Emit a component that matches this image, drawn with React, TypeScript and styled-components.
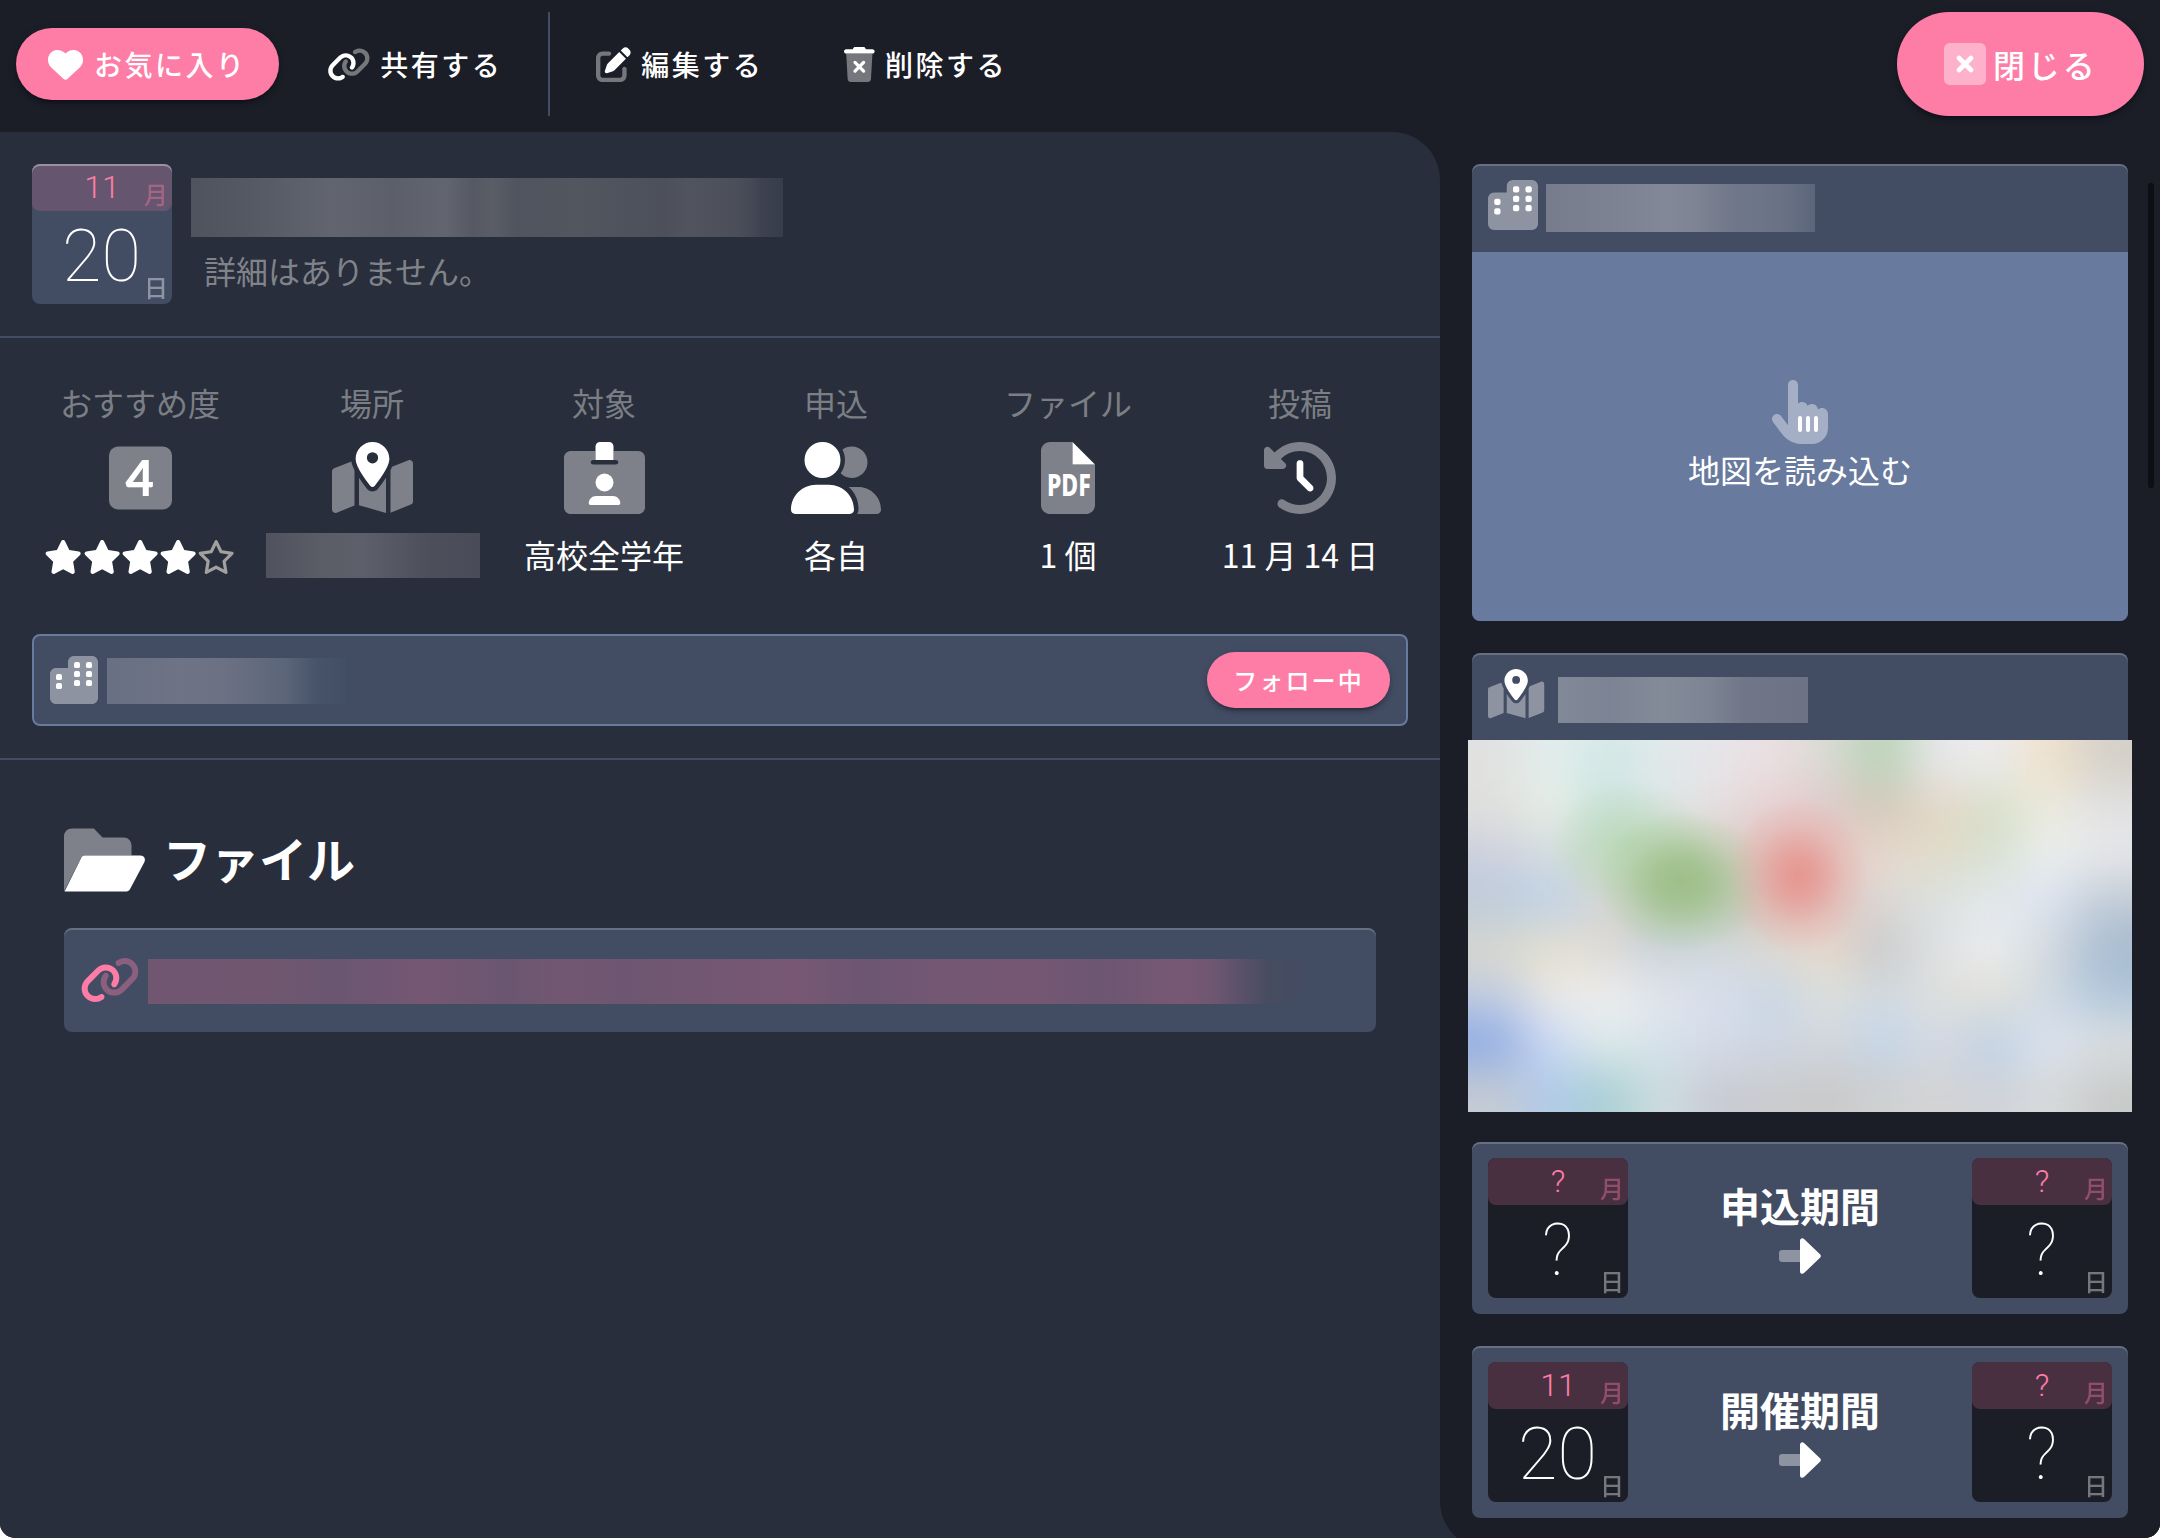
import React from "react";
import styled, { createGlobalStyle, css } from "styled-components";
import { FaHeart, FaStar, FaRegStar } from "react-icons/fa6";

const color = {
  base: "#1b1d27",
  panel: "#282e3b",
  card: "#424c63",
  accent: "#687a9e",
  pink: "#fd7da7",
  highlight: "inset 0 2px 0 rgba(255, 255, 255, 0.2)",
};

const Global = createGlobalStyle`
  * { box-sizing: border-box; }
  html, body { margin: 0; padding: 0; background: #fff; }
  body {
    color: #fff;
    font-family: "Noto Sans CJK JP", sans-serif;
    font-size: 32px;
    line-height: 1;
    overflow: hidden;
  }
`;

const Screen = styled.div`
  display: flex;
  flex-direction: column;
  width: 2160px;
  height: 1538px;
  overflow: hidden;
  border-radius: 0 0 15px 15px;
  background: ${color.base};
`;

/* ---------- icons ---------- */

const IconSvg = styled.svg<{ $size: number; $ratio?: number }>`
  display: block;
  flex: none;
  height: ${(p) => p.$size}px;
  width: ${(p) => p.$size * (p.$ratio ?? 1)}px;
  fill: currentColor;
  overflow: visible;
  .soft { opacity: 0.4; }
`;

type IconProps = { size: number };

const LinkIcon = ({ size }: IconProps) => (
  <IconSvg $size={size} $ratio={1.25} viewBox="0 0 640 512">
    <path className="soft" d="M579.8 267.7c56.5-56.5 56.5-148 0-204.5c-50-50-128.8-56.5-186.3-15.4l-1.6 1.1c-14.4 10.3-17.7 30.3-7.4 44.6s30.3 17.7 44.6 7.4l1.6-1.1c32.1-22.9 76-19.3 103.8 8.6c31.5 31.5 31.5 82.5 0 114L422.3 334.8c-31.5 31.5-82.5 31.5-114 0c-27.9-27.9-31.5-71.8-8.6-103.8l1.1-1.6c10.3-14.4 6.9-34.4-7.4-44.6s-34.4-6.9-44.6 7.4l-1.1 1.6C206.5 251.2 213 330 263 380c56.5 56.5 148 56.5 204.5 0L579.8 267.7z" />
    <path d="M60.2 244.3c-56.5 56.5-56.5 148 0 204.5c50 50 128.8 56.5 186.3 15.4l1.6-1.1c14.4-10.3 17.7-30.3 7.4-44.6s-30.3-17.7-44.6-7.4l-1.6 1.1c-32.1 22.9-76 19.3-103.8-8.6C74 372 74 321 105.5 289.5L217.7 177.2c31.5-31.5 82.5-31.5 114 0c27.9 27.9 31.5 71.8 8.6 103.9l-1.1 1.6c-10.3 14.4-6.9 34.4 7.4 44.6s34.4 6.9 44.6-7.4l1.1-1.6C433.5 260.8 427 182 377 132c-56.5-56.5-148-56.5-204.5 0L60.2 244.3z" />
  </IconSvg>
);

const EditIcon = ({ size }: IconProps) => (
  <IconSvg $size={size} viewBox="0 0 512 512">
    <path className="soft" d="M96 64C43 64 0 107 0 160V416c0 53 43 96 96 96H352c53 0 96-43 96-96V320c0-17.7-14.3-32-32-32s-32 14.3-32 32v96c0 17.7-14.3 32-32 32H96c-17.7 0-32-14.3-32-32V160c0-17.7 14.3-32 32-32h96c17.7 0 32-14.3 32-32s-14.3-32-32-32H96z" />
    <path d="M471.6 21.7c-21.9-21.9-57.3-21.9-79.2 0L362.3 51.7l97.9 97.9 30.1-30.1c21.9-21.9 21.9-57.3 0-79.2L471.6 21.7zm-299.2 220c-6.1 6.1-10.8 13.6-13.5 21.9l-29.6 88.8c-2.9 8.6-.6 18.1 5.8 24.6s15.9 8.7 24.6 5.8l88.8-29.6c8.2-2.7 15.7-7.4 21.9-13.5L437.7 172.3 339.7 74.3 172.4 241.7z" />
  </IconSvg>
);

const TrashIcon = ({ size }: IconProps) => (
  <IconSvg $size={size} $ratio={0.875} viewBox="0 0 448 512">
    <path className="soft" d="M32 96l21.2 371c1.6 25.3 22.6 45 47.9 45H346.9c25.3 0 46.3-19.7 47.9-45L416 96z" />
    <path d="M135.2 17.7L128 32H32C14.3 32 0 46.3 0 64S14.3 96 32 96H416c17.7 0 32-14.3 32-32s-14.3-32-32-32H320l-7.2-14.3C307.4 6.8 296.3 0 284.2 0H163.8c-12.1 0-23.2 6.8-28.6 17.7z" />
    <path d="M161 226L287 352M287 226L161 352" fill="none" stroke="currentColor" strokeWidth="48" strokeLinecap="round" />
  </IconSvg>
);

const CloseIcon = ({ size }: IconProps) => (
  <IconSvg $size={size} viewBox="0 0 448 448">
    <rect className="soft" width="448" height="448" rx="60" />
    <path d="M160 160L288 288M288 160L160 288" fill="none" stroke="currentColor" strokeWidth="50" strokeLinecap="round" />
  </IconSvg>
);

const RatingIcon = ({ size }: IconProps) => (
  <IconSvg $size={size} $ratio={0.875} viewBox="0 0 448 512">
    <rect className="soft" y="32" width="448" height="448" rx="64" />
    <text x="218" y="382" textAnchor="middle" fontFamily="Lato, sans-serif" fontWeight="900" fontSize="350">4</text>
  </IconSvg>
);

const MapIcon = ({ size }: IconProps) => (
  <IconSvg $size={size} $ratio={1.125} viewBox="0 0 576 512">
    <path className="soft" d="M416 200.4c3.5-6.9 6.7-13.8 9.6-20.6c.5-1.2 1-2.5 1.5-3.7l116-46.4C558.9 123.4 576 135 576 152V422.8c0 9.8-6 18.6-15.1 22.3L416 503V200.4zM137.6 138.3c2.4 14.1 7.2 28.3 12.8 41.5c2.9 6.8 6.1 13.7 9.6 20.6V451.8L32.9 502.7C17.1 509 0 497.4 0 480.4V209.6c0-9.8 6-18.6 15.1-22.3l122.6-49zM327.8 332c13.9-17.4 35.7-45.7 56.2-77V504.3L192 449.4V255c20.5 31.3 42.3 59.6 56.2 77c20.5 25.6 59.1 25.6 79.6 0z" />
    <path fillRule="evenodd" d="M408 120c0 54.6-73.1 151.9-105.2 192c-7.7 9.6-22 9.6-29.6 0C241.1 271.9 168 174.6 168 120C168 53.7 221.7 0 288 0s120 53.7 120 120zM288 152a40 40 0 1 0 0-80 40 40 0 1 0 0 80z" />
  </IconSvg>
);

const BadgeIcon = ({ size }: IconProps) => (
  <IconSvg $size={size} $ratio={1.125} viewBox="0 0 576 512">
    <path className="soft" fillRule="evenodd" d="M48 64H224V128H208c-10 0-18 7-18 16s8 16 18 16H368c10 0 18-7 18-16s-8-16-18-16H352V64H528c26.500 0 48 21.500 48 48V464c0 26.500-21.500 48-48 48H48c-26.500 0-48-21.500-48-48V112C0 85.500 21.500 64 48 64z" />
    <path d="M224 128V32c0-17.700 14.300-32 32-32h64c17.700 0 32 14.300 32 32V128z" />
    <circle cx="288" cy="288" r="64" />
    <path d="M176 436c0-29 23-52 52-52H348c29 0 52 23 52 52c0 7-5 12-12 12H188c-7 0-12-5-12-12z" />
  </IconSvg>
);

const PeopleIcon = ({ size }: IconProps) => (
  <IconSvg $size={size} $ratio={1.25} viewBox="0 0 640 512">
    <path className="soft" d="M609.3 512H471.4c5.4-9.4 8.6-20.3 8.6-32v-8c0-60.7-27.1-115.2-69.8-151.8c2.4-.1 4.700-.2 7.100-.2h61.400C567.800 320 640 392.200 640 481.300c0 17-13.800 30.700-30.700 30.700zM432 256c-31 0-59-12.600-79.300-32.900C372.400 196.500 384 163.600 384 128c0-26.800-6.600-52.100-18.300-74.300C384.300 40.100 407.200 32 432 32c61.900 0 112 50.100 112 112s-50.100 112-112 112z" />
    <path d="M96 128a128 128 0 1 1 256 0A128 128 0 1 1 96 128zM0 482.300C0 383.800 79.800 304 178.300 304h91.400C368.200 304 448 383.800 448 482.300c0 16.400-13.300 29.700-29.700 29.700H29.700C13.300 512 0 498.700 0 482.300z" />
  </IconSvg>
);

const PdfIcon = ({ size }: IconProps) => (
  <IconSvg $size={size} $ratio={0.75} viewBox="0 0 384 512">
    <path className="soft" d="M64 0H224V160H384V448c0 35.300-28.700 64-64 64H64c-35.300 0-64-28.700-64-64V64C0 28.700 28.700 0 64 0z" />
    <path d="M224 0L384 160H224z" />
    <text x="42" y="382" textLength="312" lengthAdjust="spacingAndGlyphs" fontFamily="'Noto Sans', sans-serif" fontWeight="800" fontSize="218">PDF</text>
  </IconSvg>
);

const HistoryIcon = ({ size }: IconProps) => (
  <IconSvg $size={size} viewBox="0 0 512 512">
    <path className="soft" d="M75 75L41 41C25.900 25.900 0 36.600 0 57.900V168c0 13.300 10.700 24 24 24H134.100c21.400 0 32.100-25.900 17-41l-30.800-30.800C155 85.500 203 64 256 64c106 0 192 86 192 192s-86 192-192 192c-40.800 0-78.600-12.700-109.700-34.400c-14.500-10.100-34.400-6.600-44.600 7.900s-6.600 34.400 7.900 44.600C151.200 495 201.700 512 256 512c141.400 0 256-114.600 256-256S397.400 0 256 0C185.300 0 121.300 28.700 75 75z" />
    <path d="M256 128c-13.300 0-24 10.700-24 24V256c0 6.400 2.500 12.500 7 17l72 72c9.400 9.400 24.600 9.400 33.900 0s9.400-24.600 0-33.900l-65-65V152c0-13.300-10.700-24-24-24z" />
  </IconSvg>
);

const WINDOWS = [
  [64, 192], [64, 288],
  [256, 64], [256, 160], [256, 256],
  [384, 64], [384, 160], [384, 256],
];

const BuildingIcon = ({ size }: IconProps) => (
  <IconSvg $size={size} viewBox="0 0 512 512">
    <path className="soft" d="M192 64c0-35.300 28.700-64 64-64H448c35.300 0 64 28.700 64 64V448c0 35.300-28.700 64-64 64H64c-35.300 0-64-28.700-64-64V192c0-35.300 28.700-64 64-64H192z" />
    {WINDOWS.map(([x, y]) => (
      <rect key={`${x}-${y}`} x={x} y={y} width="64" height="64" rx="20" />
    ))}
  </IconSvg>
);

const FolderIcon = ({ size }: IconProps) => (
  <IconSvg $size={size} $ratio={1.125} viewBox="0 0 576 512">
    <path className="soft" d="M0 480V88C0 57 25 32 56 32H212L274 96H424c31 0 56 25 56 56V224H147c-10 0-19 5-24 14z" />
    <path d="M4 480L123 240C128 230 137 224 148 224H544c24 0 39 24 28 46L470 463c-5 10-15 17-26 17z" />
  </IconSvg>
);

const PointerIcon = ({ size }: IconProps) => (
  <IconSvg $size={size} $ratio={0.875} viewBox="0 0 448 512">
    <path className="soft" d="M128 40c0-22.100 17.900-40 40-40s40 17.900 40 40V188.200c8.500-7.600 19.700-12.200 32-12.200c20.600 0 38.200 13 45 31.200c8.800-9.300 21.200-15.200 35-15.200c25.300 0 46 19.500 47.900 44.300c8.500-7.700 19.800-12.300 32.100-12.300c26.500 0 48 21.500 48 48v112c0 70.700-57.300 128-128 128H234.700c-5 0-9.900-.3-14.700-1c-55.300-5.600-106.200-34-140-79L8 336c-13.300-17.700-9.700-42.700 8-56s42.700-9.700 56 8l56 74.700V40z" />
    <rect x="208" y="288" width="32" height="128" rx="16" />
    <rect x="272" y="288" width="32" height="128" rx="16" />
    <rect x="336" y="288" width="32" height="128" rx="16" />
  </IconSvg>
);

const ArrowIcon = ({ size }: IconProps) => (
  <IconSvg $size={size} $ratio={42 / 36} viewBox="0 0 42 36">
    <path className="soft" d="M3 12H21V24H3a3 3 0 0 1-3-3V15a3 3 0 0 1 3-3z" />
    <path d="M21 2.500C21 .4 23.500-.7 25 .9L41 16.200c1.100 1 1.100 2.600 0 3.600L25 35.100c-1.500 1.600-4 .5-4-1.600z" />
  </IconSvg>
);

/* ---------- toolbar ---------- */

const Toolbar = styled.header`
  display: flex;
  align-items: center;
  flex: none;
  height: 132px;
  padding: 0 16px 4px;
`;

const pill = css`
  background: ${color.pink};
  box-shadow: 0 6px 2px -4px rgba(0, 0, 0, 0.2), 0 4px 4px rgba(0, 0, 0, 0.14), 0 2px 10px rgba(0, 0, 0, 0.12);
`;

const ToolButton = styled.button<{ $filled?: boolean; $left?: number; $gap?: number }>`
  display: flex;
  align-items: center;
  gap: ${(p) => p.$gap ?? 10}px;
  height: 72px;
  padding: 0 ${(p) => (p.$filled ? 32 : 0)}px;
  margin-left: ${(p) => p.$left ?? 0}px;
  border: 0;
  border-radius: 36px;
  background: transparent;
  color: #fff;
  font: 500 28px/1 "Noto Sans CJK JP", sans-serif;
  letter-spacing: 0.0893em;
  white-space: nowrap;
  ${(p) => p.$filled && pill}
`;

const ToolDivider = styled.div`
  width: 2px;
  height: 104px;
  margin-left: 46px;
  background: ${color.card};
`;

const CloseButton = styled(ToolButton)`
  width: 247px;
  height: 104px;
  margin-left: auto;
  padding: 0 0 0 47px;
  border-radius: 52px;
  font-size: 32px;
`;

/* ---------- main panel ---------- */

const Body = styled.div`
  display: flex;
  flex: 1;
  min-height: 0;
`;

const Main = styled.main`
  width: 1440px;
  background: ${color.panel};
  border-top-right-radius: 48px;
`;

const Section = styled.section`
  border-bottom: 2px solid ${color.card};
`;

const Heading = styled(Section)`
  display: flex;
  height: 206px;
  padding: 32px;
`;

const HeadingText = styled.div`
  display: flex;
  flex-direction: column;
  padding: 14px 0 0 19px;
`;

const Detail = styled.p`
  margin: 17px 0 0 13px;
  color: #808389;
`;

const Redacted = styled.div<{ $w: number; $h: number; $fill: string }>`
  flex: none;
  width: ${(p) => p.$w}px;
  height: ${(p) => p.$h}px;
  background: linear-gradient(90deg, ${(p) => p.$fill});
`;

/* ---------- calendar tile ---------- */

const Tile = styled.div<{ $raised?: boolean }>`
  display: flex;
  flex-direction: column;
  flex: none;
  width: 140px;
  height: 140px;
  border-radius: 8px;
  background: ${(p) => (p.$raised ? color.card : color.base)};
`;

const TileMonth = styled.div<{ $raised?: boolean }>`
  position: relative;
  display: flex;
  align-items: center;
  justify-content: center;
  height: 47px;
  padding-bottom: 2px;
  border-radius: 8px;
  background: ${(p) => (p.$raised ? "#66556e" : "#493041")};
  box-shadow: ${(p) => (p.$raised ? "inset 0 2px 0 rgba(255,255,255,0.35)" : "none")};
  color: ${color.pink};
  font-family: Roboto, sans-serif;
  font-weight: 300;
  font-size: 32px;
`;

const TileDay = styled.div`
  position: relative;
  display: flex;
  align-items: center;
  justify-content: center;
  height: 93px;
  padding: 0 1px 2px 0;
  font-family: Roboto, sans-serif;
  font-weight: 100;
  font-size: 72px;
`;

const TileUnit = styled.span`
  position: absolute;
  right: 4px;
  bottom: 5px;
  opacity: 0.4;
  font: 500 24px/1 "Noto Sans CJK JP", sans-serif;
`;

const DateTile = ({ month, day, raised }: { month: string; day: string; raised?: boolean }) => (
  <Tile $raised={raised}>
    <TileMonth $raised={raised}>
      {month}
      <TileUnit>月</TileUnit>
    </TileMonth>
    <TileDay>
      {day}
      <TileUnit>日</TileUnit>
    </TileDay>
  </Tile>
);

/* ---------- facts ---------- */

const Facts = styled(Section)`
  height: 422px;
  padding: 48px 24px 0;
`;

const FactGrid = styled.div`
  display: grid;
  grid-template-columns: repeat(6, 232px);
  height: 248px;
`;

const Fact = styled.div`
  display: flex;
  flex-direction: column;
  align-items: center;
`;

const FactLabel = styled.div`
  height: 56px;
  color: #7b7e85;
`;

const FactValue = styled.div`
  display: flex;
  align-items: center;
  height: 50px;
  margin-top: 15px;
  white-space: nowrap;
  > ${Redacted} { margin: 2px 0 0 2px; }
`;

const Stars = styled.div`
  display: flex;
  margin-top: 5px;
  svg { width: 38.250px; height: 34px; }
  svg:last-child { color: #a3a19f; }
`;

const OrgRow = styled.div`
  display: flex;
  align-items: center;
  height: 92px;
  margin: 0 8px;
  padding: 0 16px;
  border: 2px solid ${color.accent};
  border-radius: 8px;
  background: ${color.card};
`;

const OrgName = styled.div`
  flex: 1;
  padding: 2px 0 0 9px;
`;

const FollowButton = styled.button`
  ${pill}
  width: 183px;
  height: 56px;
  padding: 0;
  border: 0;
  border-radius: 28px;
  color: #fff;
  font: 500 24px/1 "Noto Sans CJK JP", sans-serif;
  letter-spacing: 0.0893em;
`;

/* ---------- files ---------- */

const Files = styled.section`
  padding: 64px;
`;

const FilesTitle = styled.h2`
  display: flex;
  align-items: center;
  gap: 18px;
  height: 72px;
  margin: 0 0 32px;
  font-size: 48px;
  font-weight: 700;
`;

const FilesLabel = styled.span`
  padding-bottom: 6px;
`;

const FileCard = styled.a`
  display: flex;
  align-items: center;
  gap: 8px;
  height: 104px;
  padding-left: 16px;
  border-radius: 8px;
  background: ${color.card};
  box-shadow: ${color.highlight};
  color: ${color.pink};
  > ${Redacted} { margin-top: 3px; }
`;

/* ---------- sidebar ---------- */

const Side = styled.aside`
  flex: 1;
  background: ${color.panel};
`;

const SideInner = styled.div`
  display: flex;
  height: 1417px;
  padding: 32px 6px 0 32px;
  background: ${color.base};
  border-bottom-left-radius: 48px;
`;

const SideList = styled.div`
  display: flex;
  flex-direction: column;
  gap: 32px;
  width: 656px;
`;

const ScrollThumb = styled.div`
  width: 6px;
  height: 305px;
  margin: 19px 0 0 auto;
  border-radius: 3px;
  background: #0e0f14;
`;

const SideCard = styled.section<{ $h: number }>`
  flex: none;
  height: ${(p) => p.$h}px;
  border-radius: 8px;
  background: ${color.card};
  box-shadow: ${color.highlight};
`;

const CardHead = styled.div<{ $h: number; $gap: number; $shift?: number }>`
  display: flex;
  align-items: flex-start;
  gap: ${(p) => p.$gap}px;
  height: ${(p) => p.$h}px;
  padding: 16px 16px 0;
  > div { margin-top: ${(p) => p.$shift ?? 4}px; }
`;

const LoadMap = styled.div`
  display: flex;
  flex-direction: column;
  align-items: center;
  gap: 9px;
  height: 369px;
  padding-top: 128px;
  border-radius: 0 0 8px 8px;
  background: ${color.accent};
`;

const MapView = styled.div`
  position: relative;
  height: 372px;
  margin: 0 -4px;
  overflow: hidden;
  background: #dcdfe1;

  &::after {
    content: "";
    position: absolute;
    inset: 0;
    background:
      radial-gradient(ellipse 10.5% 21% at 49.8% 36.500%, rgba(230, 146, 140, 0.9), rgba(230, 150, 145, 0.75) 25%, rgba(230, 165, 160, 0.3) 65%, rgba(230, 175, 170, 0) 100%),
      radial-gradient(ellipse 13% 19% at 32.2% 38%, rgba(156, 190, 134, 0.95), rgba(158, 192, 138, 0.8) 28%, rgba(165, 200, 150, 0.3) 68%, rgba(170, 205, 155, 0) 100%),
      radial-gradient(ellipse 12% 17% at 24% 28%, rgba(178, 215, 175, 0.6), rgba(180, 215, 180, 0) 100%);
  }
`;

const MapTiles = styled.div`
  display: grid;
  grid-template-columns: repeat(14, 55.340px);
  grid-template-rows: repeat(10, 46.500px);
  margin: -46.500px 0 0 -55.340px;
  filter: blur(24px);
`;

const Period = styled(SideCard)`
  display: flex;
  align-items: center;
  justify-content: space-between;
  padding: 0 16px;
`;

const PeriodTitle = styled.div`
  display: flex;
  flex-direction: column;
  align-items: center;
  gap: 13px;
  padding-top: 3px;
  font-size: 40px;
  font-weight: 700;
`;

const MAP_COLORS = [
  "e0e1e0 e2eeed d3e8e6 e0e9eb e6e5e8 ebdfe2 d9dad3 b8d2b6 e8e8ea ebebed f0e2cc d4d0c8",
  "e0e0dc e8eee5 c6e1dc dfe6e7 e6dfe1 e7cfd1 e0c9c8 d5c8bb e5d5c6 d5dec4 ebebdf e2e3e5",
  "cccfde d3dbe0 cbdcc5 b9cfae cfcfc0 e3bcb7 e6c3be e8dacf dfddc9 d8e0d3 ecefef e6e6e9",
  "bccbdb bdd2ea d8d5d5 b8cbb0 b8c8b4 ddc0b9 e1c3c0 dad8d7 dbe1e1 e3e9ed dae3f2 c0cad5",
  "d9d8cd e6e0cb dedad6 c9d2db d2dade dedbd4 e8d9ca c8c9ca dfe1e4 ecedef d4dadd a6bad0",
  "c1cce1 ebeae7 eeeff0 e3e6ec d8deec c7d6e5 dce1dd d3dae1 dfe0dc e2e1d6 cfd9e3 b1c7dc",
  "8caae5 cbd9f6 e1ebe9 d4e1ed d6dde9 ced7e5 d3d6de c1d6ea d4d9e5 bcd1e6 dce4f2 dcdfe0",
  "c5cbd3 b0cae9 a8cfd3 cedde0 c8cad4 cbccce c9c9c8 cfd0d1 d4d4d4 cfd2d9 d8dadb c8caca",
].map((row) => row.split(" "));

const clamp = (n: number, max: number) => Math.min(Math.max(n, 0), max);

const BlurredMap = () => (
  <MapView>
    <MapTiles>
      {Array.from({ length: 140 }, (_, i) => {
        const row = clamp(Math.floor(i / 14) - 1, 7);
        const col = clamp((i % 14) - 1, 11);
        return <span key={i} style={{ background: `#${MAP_COLORS[row][col]}` }} />;
      })}
    </MapTiles>
  </MapView>
);

const FILL = {
  title: "#4f535d 0%, #555963 10%, #62656f 24%, #5c5f69 34%, #62656f 43%, #5a5d67 46%, #565963 47.500%, #5a5d66 51%, #50545e 55%, #52565f 65%, #4e525c 75%, #4d505b 80%, #51545e 84%, #4c4f5a 92%, #434854 95%, #3c424f 96.500%, #373e4b 100%",
  place: "#50535e 0%, #5a5c66 25%, #5d606a 45%, #4d505b 75%, #494c58 100%",
  org: "#687083 0%, #6e7385 30%, #6b7183 50%, #5b6579 75%, #475369 88%, #424f65 100%",
  file: "#715672 0%, #70576f 10%, #6a5671 16%, #755773 24%, #6a5670 31%, #735772 36%, #6d5671 41%, #735772 48%, #775774 56%, #6c5671 62%, #735773 68%, #765773 76%, #6c5671 82%, #785874 89%, #6e5671 92%, #544f68 95%, #484c61 96.500%, #424c63 100%",
  side: "#767c8b 0%, #7c8291 25%, #828897 45%, #7e8493 55%, #70778a 70%, #697285 88%, #5c667b 100%",
  route: "#818896 0%, #7c8394 20%, #838a98 42%, #7d8493 60%, #707687 75%, #6d7385 100%",
};

const FACTS: { label: string; icon: React.ReactNode; value: React.ReactNode }[] = [
  {
    label: "おすすめ度",
    icon: <RatingIcon size={72} />,
    value: (
      <Stars>
        <FaStar />
        <FaStar />
        <FaStar />
        <FaStar />
        <FaRegStar />
      </Stars>
    ),
  },
  { label: "場所", icon: <MapIcon size={72} />, value: <Redacted $w={214} $h={45} $fill={FILL.place} /> },
  { label: "対象", icon: <BadgeIcon size={72} />, value: "高校全学年" },
  { label: "申込", icon: <PeopleIcon size={72} />, value: "各自" },
  { label: "ファイル", icon: <PdfIcon size={72} />, value: "1 個" },
  { label: "投稿", icon: <HistoryIcon size={72} />, value: "11 月 14 日" },
];

export default function App() {
  return (
    <Screen>
      <Global />
      <Toolbar>
        <ToolButton $filled $gap={11}>
          <FaHeart size={35} />
          お気に入り
        </ToolButton>
        <ToolButton $left={48}>
          <LinkIcon size={35} />
          共有する
        </ToolButton>
        <ToolDivider />
        <ToolButton $left={46}>
          <EditIcon size={35} />
          編集する
        </ToolButton>
        <ToolButton $left={81}>
          <TrashIcon size={35} />
          削除する
        </ToolButton>
        <CloseButton $filled $gap={7}>
          <CloseIcon size={42} />
          閉じる
        </CloseButton>
      </Toolbar>
      <Body>
        <Main>
          <Heading>
            <DateTile month="11" day="20" raised />
            <HeadingText>
              <Redacted $w={592} $h={59} $fill={FILL.title} />
              <Detail>詳細はありません。</Detail>
            </HeadingText>
          </Heading>
          <Facts>
            <FactGrid>
              {FACTS.map((f) => (
                <Fact key={f.label}>
                  <FactLabel>{f.label}</FactLabel>
                  {f.icon}
                  <FactValue>{f.value}</FactValue>
                </Fact>
              ))}
            </FactGrid>
            <OrgRow>
              <BuildingIcon size={48} />
              <OrgName>
                <Redacted $w={239} $h={46} $fill={FILL.org} />
              </OrgName>
              <FollowButton>フォロー中</FollowButton>
            </OrgRow>
          </Facts>
          <Files>
            <FilesTitle>
              <FolderIcon size={72} />
              <FilesLabel>ファイル</FilesLabel>
            </FilesTitle>
            <FileCard>
              <LinkIcon size={48} />
              <Redacted $w={1160} $h={45} $fill={FILL.file} />
            </FileCard>
          </Files>
        </Main>
        <Side>
          <SideInner>
            <SideList>
              <SideCard $h={457}>
                <CardHead $h={88} $gap={8}>
                  <BuildingIcon size={50} />
                  <Redacted $w={269} $h={48} $fill={FILL.side} />
                </CardHead>
                <LoadMap>
                  <PointerIcon size={64} />
                  地図を読み込む
                </LoadMap>
              </SideCard>
              <SideCard $h={457}>
                <CardHead $h={87} $gap={14} $shift={8}>
                  <MapIcon size={50} />
                  <Redacted $w={250} $h={46} $fill={FILL.route} />
                </CardHead>
                <BlurredMap />
              </SideCard>
              <Period $h={172}>
                <DateTile month="?" day="?" />
                <PeriodTitle>
                  申込期間
                  <ArrowIcon size={36} />
                </PeriodTitle>
                <DateTile month="?" day="?" />
              </Period>
              <Period $h={172}>
                <DateTile month="11" day="20" />
                <PeriodTitle>
                  開催期間
                  <ArrowIcon size={36} />
                </PeriodTitle>
                <DateTile month="?" day="?" />
              </Period>
            </SideList>
            <ScrollThumb />
          </SideInner>
        </Side>
      </Body>
    </Screen>
  );
}
